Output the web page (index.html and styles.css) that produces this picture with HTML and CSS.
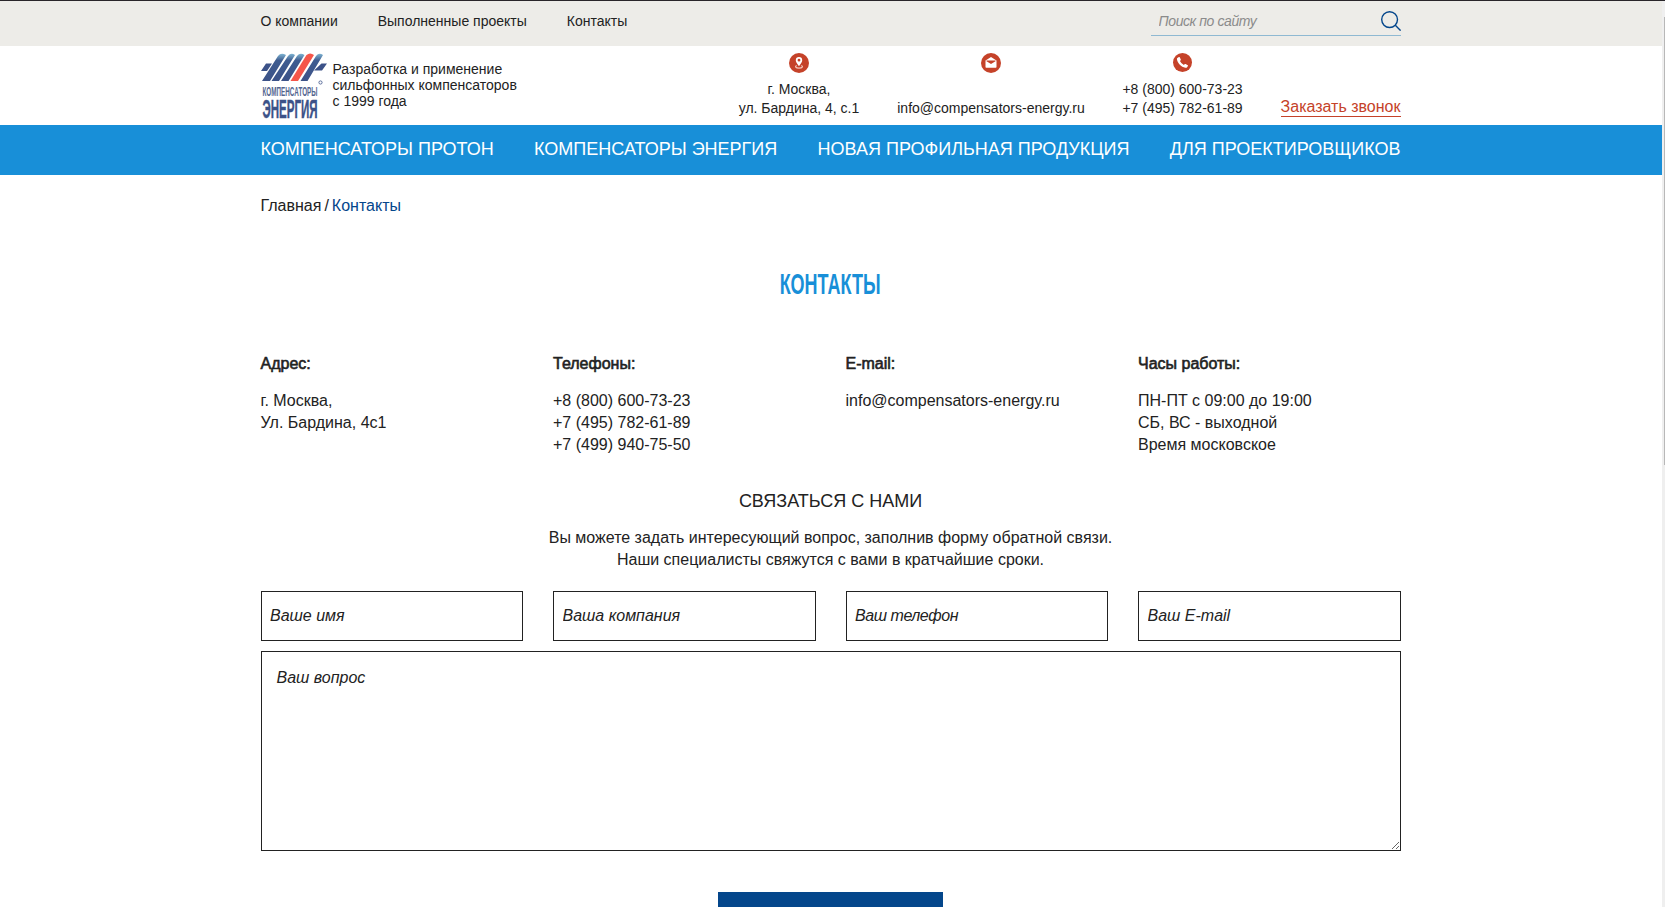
FILE: index.html
```html
<!DOCTYPE html>
<html lang="ru">
<head>
<meta charset="utf-8">
<title>Контакты</title>
<link rel="stylesheet" href="styles.css">
</head>
<body>
<div class="page">
  <div class="topbar">
    <div class="container topbar-inner">
      <nav class="topnav"><a>О компании</a><a>Выполненные проекты</a><a>Контакты</a></nav>
      <form class="search">
        <input class="search-input" type="text" placeholder="Поиск по сайту">
        <svg class="search-icon" viewBox="0 0 20 20"><circle cx="8.6" cy="8.6" r="7.9"/><path d="M14.3 14.3L19.6 19.6"/></svg>
      </form>
    </div>
  </div>
  <header class="container header">
    <svg class="logo" viewBox="0 0 66 66">
      <defs><linearGradient id="tube" x1="0" y1="0" x2="0" y2="1"><stop offset="0" stop-color="#7fb5d2"/><stop offset=".25" stop-color="#3f5c90"/><stop offset="1" stop-color="#3c5288"/></linearGradient></defs>
      <path fill="#3c5288" d="M5 10.500H11L6 18H0ZM60.500 10.500H66L61 17.500H53Z"/>
      <path fill="url(#tube)" d="M1 28L17 3Q20-1 25 2L9 28ZM10.500 28L27 3Q30-1 34 2L18 28ZM20 28L36 3Q39-1 43.500 2L27.500 28ZM39.500 28L55 3Q58-1 62 2L46.500 28Z"/>
      <path fill="#f5564a" d="M29.500 28L45.500 2Q49-1 53 2L37 28Z"/>
      <text class="logo-small" x="1.500" y="42.500" textLength="55" lengthAdjust="spacingAndGlyphs">КОМПЕНСАТОРЫ</text>
      <text class="logo-big" x="1.500" y="65" textLength="55" lengthAdjust="spacingAndGlyphs">ЭНЕРГИЯ</text>
      <circle cx="59.500" cy="29.500" r="1.600" fill="none" stroke="#3c5288" stroke-width=".8"/>
    </svg>
    <p class="slogan">Разработка и применение<br>сильфонных компенсаторов<br>с 1999 года</p>
    <div class="contact contact-address">
      <svg class="icon" viewBox="0 0 20 20"><circle cx="10" cy="10" r="10" fill="#c54229"/><path fill="#fff" fill-rule="evenodd" d="M10 4A3.200 3.200 0 0 0 6.800 7.200C6.800 9.500 10 13 10 13S13.200 9.500 13.200 7.200A3.200 3.200 0 0 0 10 4ZM10 5.800A1.400 1.400 0 1 1 10 8.600A1.400 1.400 0 0 1 10 5.800Z"/><path d="M7.700 12.500C5.600 13.400 6.500 15.200 10 15.200S14.400 13.400 12.300 12.500" fill="none" stroke="#f3c5bb" stroke-width="1.200"/></svg>
      <span>г. Москва,<br>ул. Бардина, 4, с.1</span>
    </div>
    <div class="contact contact-mail">
      <svg class="icon" viewBox="0 0 20 20"><circle cx="10" cy="10" r="10" fill="#c54229"/><path fill="#fff" d="M4.500 7.500L10 4L15.500 7.500V14Q15.500 14.700 14.800 14.700H5.200Q4.500 14.700 4.500 14Z"/><path fill="#c54229" d="M5.500 7.600H14.500V8.300L10 11L5.500 8.300Z"/></svg>
      <span>info@compensators-energy.ru</span>
    </div>
    <div class="contact contact-phone">
      <svg class="icon icon-phone" viewBox="0 0 20 20"><circle cx="10" cy="10" r="10" fill="#c54229"/><path fill="#fff" d="M4.600 5.200L6.200 4.200Q6.800 4 7.100 4.600L8.200 6.900Q8.400 7.400 7.900 7.800L7.300 8.400Q8.500 11 11.500 12.600L12.400 11.700Q12.800 11.300 13.300 11.600L15.500 12.800Q16 13.200 15.700 13.700L14.800 15Q14.200 15.800 13 15.500C8.500 14.500 5 11 4.200 6.800Q4 5.700 4.600 5.200Z"/></svg>
      <span>+8 (800) 600-73-23<br>+7 (495) 782-61-89</span>
    </div>
    <a class="callback">Заказать звонок</a>
  </header>
  <nav class="mainnav"><div class="container mainnav-inner">
    <a>КОМПЕНСАТОРЫ ПРОТОН</a><a>КОМПЕНСАТОРЫ ЭНЕРГИЯ</a><a>НОВАЯ ПРОФИЛЬНАЯ ПРОДУКЦИЯ</a><a>ДЛЯ ПРОЕКТИРОВЩИКОВ</a>
  </div></nav>
  <main class="container">
    <div class="breadcrumbs"><a>Главная</a><span class="slash">/</span><span class="current">Контакты</span></div>
    <h1 class="title"><span class="title-text">КОНТАКТЫ</span></h1>
    <section class="columns">
      <div><h2>Адрес:</h2><p>г. Москва,<br>Ул. Бардина, 4с1</p></div>
      <div><h2>Телефоны:</h2><p>+8 (800) 600-73-23<br>+7 (495) 782-61-89<br>+7 (499) 940-75-50</p></div>
      <div><h2>E-mail:</h2><p>info@compensators-energy.ru</p></div>
      <div><h2>Часы работы:</h2><p>ПН-ПТ с 09:00 до 19:00<br>СБ, ВС - выходной<br>Время московское</p></div>
    </section>
    <h3 class="form-title">СВЯЗАТЬСЯ С НАМИ</h3>
    <p class="form-text">Вы можете задать интересующий вопрос, заполнив форму обратной связи.<br>Наши специалисты свяжутся с вами в кратчайшие сроки.</p>
    <form class="form">
      <div class="fields">
        <input class="field" placeholder="Ваше имя"><input class="field" placeholder="Ваша компания"><input class="field" placeholder="Ваш телефон"><input class="field" placeholder="Ваш E-mail">
      </div>
      <textarea class="question" placeholder="Ваш вопрос"></textarea>
      <button class="submit" type="button" aria-label="Отправить"></button>
    </form>
  </main>
</div>
<div class="scrollbar"><div class="thumb"></div></div>
</body>
</html>
```
FILE: styles.css
```css
* { box-sizing: border-box; }
body, p, h1, h2, h3 { margin: 0; }
body { display: flex; height: 907px; overflow: hidden; background: #fff; border-top: 1px solid #29252a; color: #222; font: 16px/22px "Liberation Sans", Arial, sans-serif; }
.page { flex: 1; }
.container { width: 1140px; margin: 0 0 0 calc(50% - 570.5px); }
.topbar { height: 45px; background: #edece8; font-size: 14px; }
.topbar-inner { display: flex; justify-content: space-between; }
.topnav { display: flex; gap: 40px; padding-top: 9px; }
.search { display: flex; justify-content: space-between; width: 250px; height: 35px; border-bottom: 1px solid #8fb9d2; }
.search-input { width: 200px; height: 22px; margin-top: 9px; padding: 0 0 0 8px; border: 0; background: none; font: italic 14px/22px "Liberation Sans", Arial, sans-serif; letter-spacing: -.4px; }
.search-input::placeholder { color: #8b8b8b; opacity: 1; }
.search-icon { width: 20px; height: 20px; margin-top: 10px; fill: none; stroke: #04468b; stroke-width: 1.4; }
.header { display: flex; height: 79px; font-size: 14px; line-height: 19px; }
.logo { width: 66px; height: 66px; margin-top: 7px; flex: none; }
.logo-small { font: bold 13px "Liberation Sans", sans-serif; fill: #53658f; }
.logo-big { font: bold 26px "Liberation Sans", sans-serif; fill: #3c5288; stroke: #3c5288; stroke-width: .5; }
.slogan { width: 200px; margin: 15px 0 0 6px; line-height: 16px; }
.contact { display: flex; flex-direction: column; align-items: center; justify-content: space-between; height: 65px; margin-top: 7px; text-align: center; white-space: nowrap; }
.contact-address { width: 121px; margin-left: 206px; }
.contact-mail { width: 188px; margin-left: 37.5px; }
.contact-phone { width: 120px; margin-left: 37.5px; }
.icon { width: 20px; height: 20px; }
.icon-phone { width: 19px; height: 19px; }
.callback { height: 19px; margin: 52px 0 0 auto; border-bottom: 1px solid #c54229; color: #c54229; font-size: 16px; line-height: 18px; white-space: nowrap; }
.mainnav { height: 50px; background: #188fd8; color: #fff; font-size: 18px; }
.mainnav-inner { display: flex; justify-content: space-between; padding-top: 13px; white-space: nowrap; }
.breadcrumbs { display: flex; padding-top: 20px; }
.slash { margin: 0 3px; }
.current { color: #04468b; }
.title { height: 40px; margin-top: 47px; color: #188fd8; font-size: 30px; line-height: 40px; text-align: center; }
.title-text { display: inline-block; transform: scaleX(.6); }
.columns { display: grid; grid-template-columns: repeat(4, 1fr); gap: 30px; height: 107px; margin-top: 49px; }
.columns h2 { margin-bottom: 15px; font-size: 16px; font-weight: 400; -webkit-text-stroke: .6px #222; }
.form-title { margin-top: 30px; font-size: 18px; font-weight: 400; text-align: center; }
.form-text { margin-top: 15px; text-align: center; }
.form { display: flex; flex-direction: column; margin-top: 20px; }
.fields { display: grid; grid-template-columns: repeat(4, 1fr); gap: 30px; }
.field, .question { border: 1px solid #222; border-radius: 0; background: #fff; color: #222; font: italic 16px/22px "Liberation Sans", Arial, sans-serif; }
.field { width: 100%; height: 50px; padding: 0 8.5px; }
.question { height: 200px; margin-top: 10px; padding: 15px; }
.field::placeholder, .question::placeholder { color: #222; opacity: 1; }
.field:nth-child(3) { letter-spacing: -.45px; }
.submit { align-self: center; width: 225px; height: 50px; margin-top: 41px; border: 0; background: #04468b; }
.scrollbar { width: 3px; background: #efefef; }
.thumb { width: 1px; height: 448px; margin: 16px 0 0 2px; background: #b8b8b8; }
```
